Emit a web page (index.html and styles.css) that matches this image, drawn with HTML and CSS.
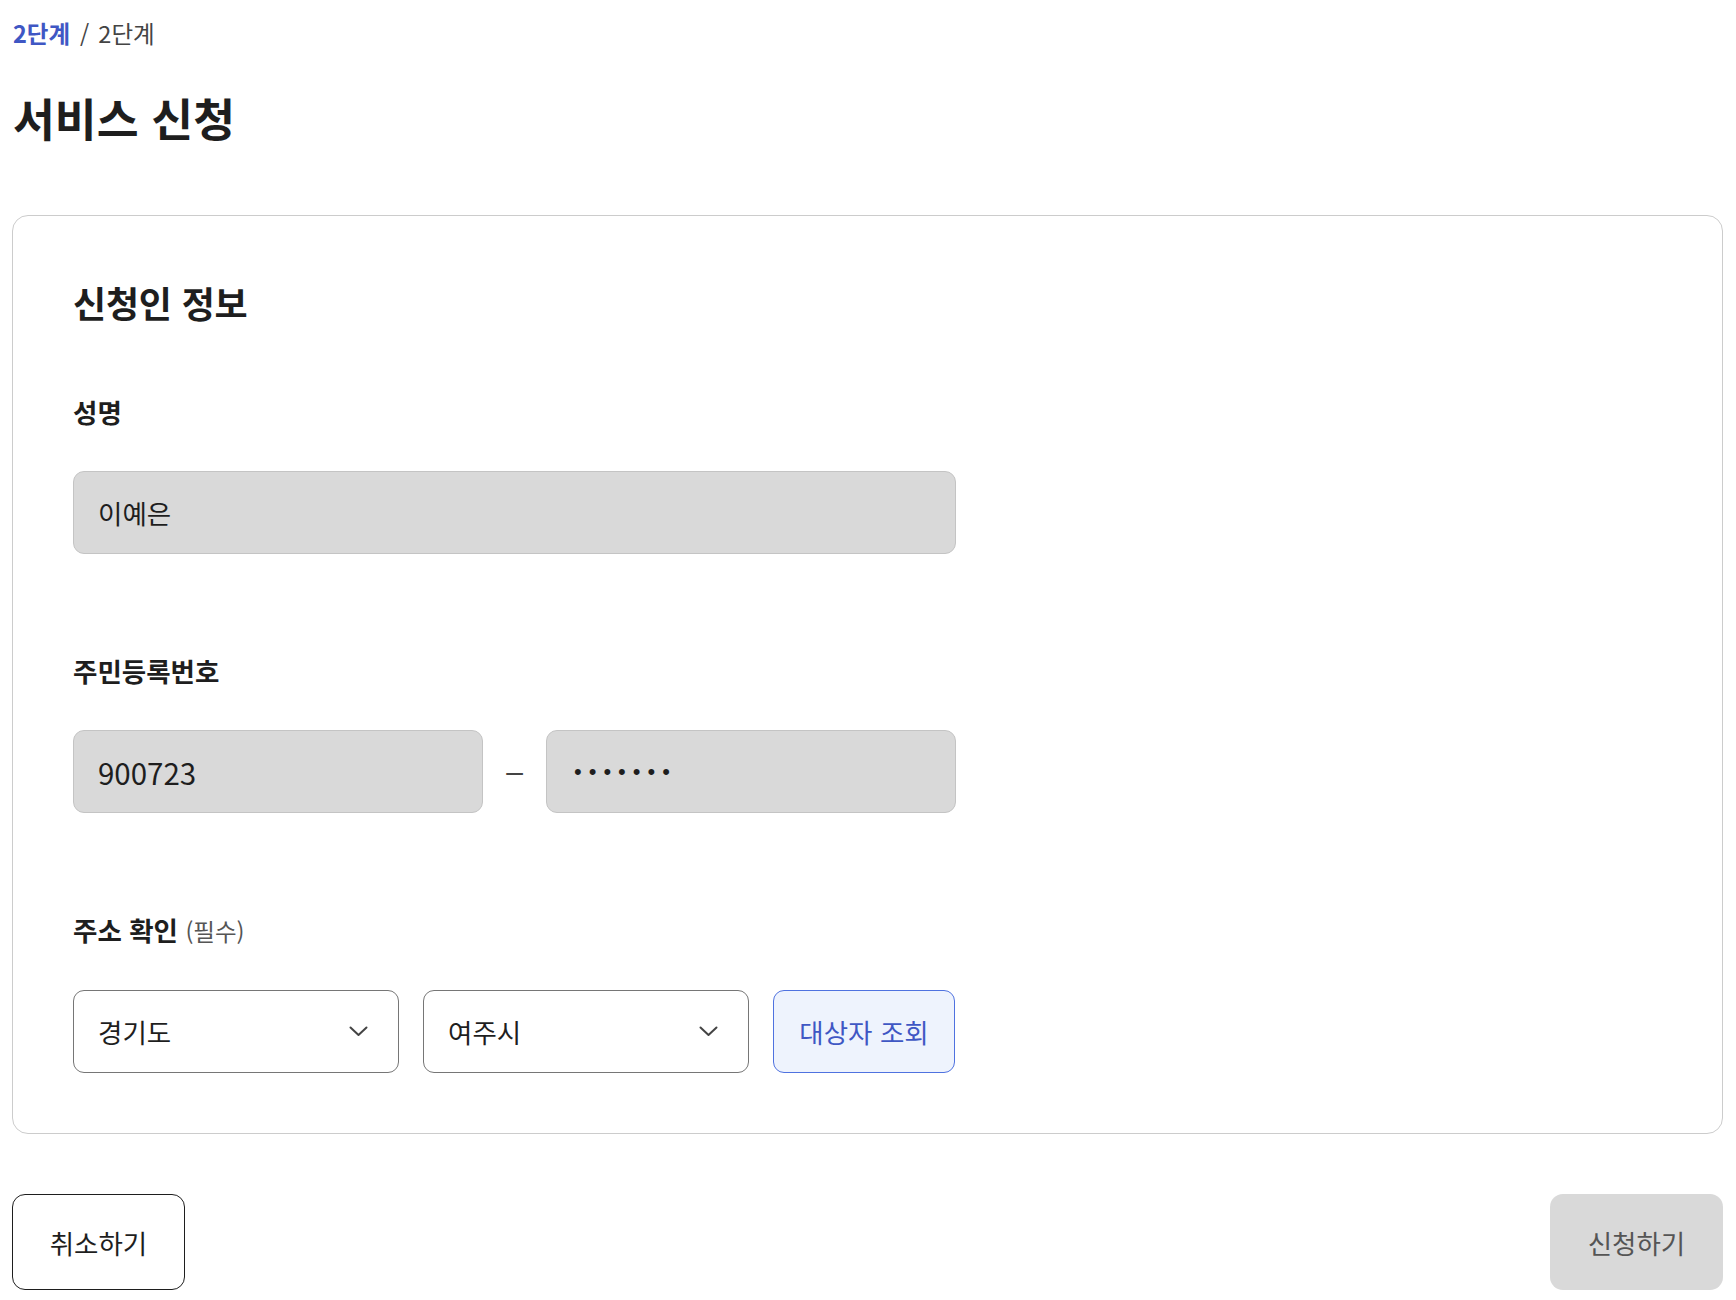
FILE: index.html
```html
<!DOCTYPE html>
<html lang="ko">
<head>
<meta charset="utf-8">
<title>서비스 신청</title>
<link rel="stylesheet" href="styles.css">
</head>
<body>
<div class="page">
  <nav class="breadcrumb">
    <span class="crumb-current">2단계</span>
    <span class="crumb-sep">/</span>
    <span class="crumb">2단계</span>
  </nav>
  <h1 class="page-title">서비스 신청</h1>

  <section class="card">
    <h2 class="section-title">신청인 정보</h2>

    <div class="field">
      <div class="label">성명</div>
      <div class="input input-wide">이예은</div>
    </div>

    <div class="field">
      <div class="label">주민등록번호</div>
      <div class="row">
        <div class="input input-half digits">900723</div>
        <div class="dash">–</div>
        <div class="input input-half password">•••••••</div>
      </div>
    </div>

    <div class="field">
      <div class="label">주소 확인 <span class="label-note">(필수)</span></div>
      <div class="row row-gap">
        <div class="select">
          <span>경기도</span>
          <svg class="chevron" width="19" height="11" viewBox="0 0 19 11"><polyline points="1.5,1.5 9.5,9 17.5,1.5" fill="none" stroke="#444" stroke-width="2" stroke-linecap="round" stroke-linejoin="round"/></svg>
        </div>
        <div class="select">
          <span>여주시</span>
          <svg class="chevron" width="19" height="11" viewBox="0 0 19 11"><polyline points="1.5,1.5 9.5,9 17.5,1.5" fill="none" stroke="#444" stroke-width="2" stroke-linecap="round" stroke-linejoin="round"/></svg>
        </div>
        <button class="btn-lookup" type="button">대상자 조회</button>
      </div>
    </div>
  </section>

  <div class="actions">
    <button class="btn btn-cancel" type="button">취소하기</button>
    <button class="btn btn-submit" type="button">신청하기</button>
  </div>
</div>
</body>
</html>
```

FILE: styles.css
```css
* {
  box-sizing: border-box;
}

html, body {
  margin: 0;
  padding: 0;
  background: #ffffff;
}

body {
  font-family: "Noto Sans CJK KR", "Noto Sans", sans-serif;
  color: #1e1e1e;
}

.page {
  padding: 16px 13px 0 12px;
}

.breadcrumb {
  display: flex;
  align-items: center;
  height: 34px;
  font-size: 23.5px;
  line-height: 34px;
  padding-left: 1px;
}

.crumb-current {
  color: #3f57c4;
  font-weight: 700;
}

.crumb-sep {
  color: #444;
  margin: 0 9px 0 10px;
}

.crumb {
  color: #444;
}

.page-title {
  margin: 37px 0 0 0;
  padding-left: 1px;
  font-size: 45.5px;
  line-height: 60px;
  font-weight: 700;
  color: #1e1e1e;
}

.card {
  margin-top: 68px;
  border: 1px solid #cccccc;
  border-radius: 16px;
  padding: 60px;
  display: flex;
  flex-direction: column;
  gap: 99px;
}

.section-title {
  margin: 0 0 -33px 0;
  font-size: 36px;
  line-height: 52px;
  font-weight: 700;
  letter-spacing: -0.2px;
  color: #1e1e1e;
}

.field {
  display: flex;
  flex-direction: column;
  gap: 41px;
}

.label {
  font-size: 26.5px;
  line-height: 36px;
  font-weight: 700;
  color: #1e1e1e;
}

.label-note {
  font-size: 23.5px;
  font-weight: 400;
  color: #555;
}

.row {
  display: flex;
  align-items: center;
}

.row-gap {
  gap: 24px;
}

.input {
  height: 83px;
  background: #d9d9d9;
  border: 1px solid #c4c4c4;
  border-radius: 11px;
  padding: 0 24px;
  display: flex;
  align-items: center;
  font-size: 26.5px;
  color: #1e1e1e;
}

.input-wide {
  width: 883px;
}

.input-half {
  width: 410px;
}

.digits {
  font-size: 29.5px;
}

.password {
  padding-left: 27px;
  letter-spacing: 7px;
  font-family: "Liberation Sans", sans-serif;
  font-size: 22px;
}

.dash {
  width: 63px;
  text-align: center;
  font-family: "Liberation Sans", sans-serif;
  font-size: 30px;
  color: #444;
}

.select {
  width: 326px;
  height: 83px;
  border: 1px solid #767676;
  border-radius: 11px;
  padding: 0 30px 0 24px;
  display: flex;
  align-items: center;
  justify-content: space-between;
  font-size: 26.5px;
  color: #1e1e1e;
  background: #fff;
}

.chevron {
  display: block;
}

.btn-lookup {
  width: 182px;
  height: 83px;
  border: 1px solid #4f72e0;
  border-radius: 11px;
  background: #eef3fd;
  color: #3f57c4;
  font-family: inherit;
  font-size: 26.5px;
  padding: 0;
}

.actions {
  margin-top: 60px;
  display: flex;
  justify-content: space-between;
}

.btn {
  width: 173px;
  height: 96px;
  border-radius: 13px;
  font-family: inherit;
  font-size: 26.5px;
  padding: 0;
}

.btn-cancel {
  background: #fff;
  border: 1px solid #1e1e1e;
  color: #1e1e1e;
}

.btn-submit {
  background: #d9d9d9;
  border: none;
  color: #555;
}
```
